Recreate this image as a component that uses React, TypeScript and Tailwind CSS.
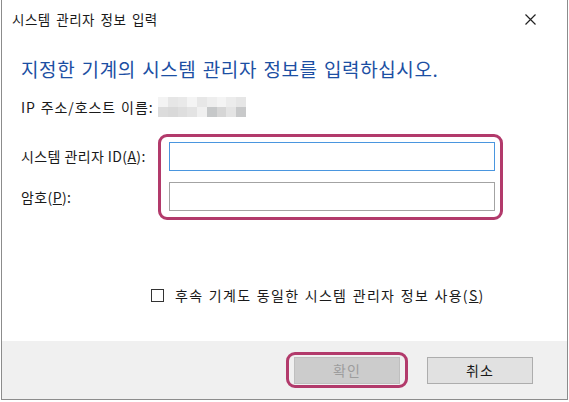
import React from "react";

const top = ["#f3f3f3", "#e6e6e6", "#e9e9e9", "#f4f4f4", "#e7e7e7", "#eeeeee", "#f4f4f4", "#ececec", "#e6e6e6"];
const bot = ["#dcdcdc", "#d9d9d9", "#dedede", "#e3e3e3", "#f0f0f0", "#c6c8c9", "#d6d6d6", "#e4e4e4", "#c8c9ca"];

export default function App() {
  const font = { fontFamily: '"Noto Sans CJK KR", "Noto Sans", sans-serif' };
  return (
    <div className="w-[569px] h-[402px] bg-white overflow-hidden" style={font}>
      <div className="ml-[1px] w-[567px] h-[400px] border-l border-r border-b border-[#8c8c8c] flex flex-col bg-white">
        {/* title bar */}
        <div className="h-[38px] flex items-center justify-between pl-[10px] pr-[31px] pt-[1px]">
          <span className="text-[13.5px] text-[#1a1a1a] tracking-[0.5px] [word-spacing:2px]">시스템 관리자 정보 입력</span>
          <svg width="11" height="11" viewBox="0 0 11 11" className="text-[#222]">
            <path d="M0.5 0.5 L10.5 10.5 M10.5 0.5 L0.5 10.5" stroke="currentColor" strokeWidth="1.2" />
          </svg>
        </div>
        {/* body */}
        <div className="flex-1 flex flex-col pl-[19px]">
          <div className="mt-[18px] text-[19px] leading-[26px] text-[#1c4fa3] tracking-[0.6px] [word-spacing:1.5px] whitespace-nowrap">
            지정한 기계의 시스템 관리자 정보를 입력하십시오.
          </div>
          <div className="mt-[15px] flex items-center h-[20px]">
            <span className="text-[14px] text-[#1a1a1a] w-[137px] tracking-[0.9px] [word-spacing:1px] whitespace-nowrap">IP 주소/호스트 이름:</span>
            <div className="grid grid-cols-9 grid-rows-2 w-[88px] h-[20px]">
              {top.map((c, i) => (
                <div key={"t" + i} style={{ background: c }} />
              ))}
              {bot.map((c, i) => (
                <div key={"b" + i} style={{ background: c }} />
              ))}
            </div>
          </div>
          <div className="mt-[17px] flex">
            <div className="w-[137px] flex flex-col text-[14px] text-[#1a1a1a] tracking-[0.4px] whitespace-nowrap">
              <div className="h-[42px] flex items-center pt-[2px]">
                <span>
                  시스템 관리자 ID(<span className="underline">A</span>):
                </span>
              </div>
              <div className="h-[41px] flex items-center pt-[2px]">
                <span>
                  암호(<span className="underline">P</span>):
                </span>
              </div>
            </div>
            <div className="w-[345px] h-[86px] border-[3px] border-[#b23a6b] rounded-[9px] flex flex-col pl-[8px] pt-[5px] gap-[11px]">
              <div className="w-[326px] h-[29px] border border-[#4a96df] bg-white" />
              <div className="w-[326px] h-[29px] border border-[#a3a3a3] bg-white" />
            </div>
          </div>
          <div className="mt-[65px] ml-[130px] flex items-center gap-[11px]">
            <div className="w-[13px] h-[13px] border border-[#333] bg-white" />
            <span className="text-[14px] text-[#1a1a1a] tracking-[1.3px] [word-spacing:1px] whitespace-nowrap">
              후속 기계도 동일한 시스템 관리자 정보 사용(<span className="underline">S</span>)
            </span>
          </div>
        </div>
        {/* footer */}
        <div className="h-[58px] bg-[#f0f0f0] flex items-center justify-end pr-[34px] gap-[19px]">
          <div className="w-[122px] h-[36px] border-[3px] border-[#b23a6b] rounded-[9px] flex items-center justify-center">
            <div className="w-[106px] h-[27px] bg-[#cccccc] border border-[#bfbfbf] flex items-center justify-center text-[14px] tracking-[1px] text-[#9d9d9d]">
              확인
            </div>
          </div>
          <div className="w-[106px] h-[27px] bg-[#e1e1e1] border border-[#adadad] flex items-center justify-center text-[14px] tracking-[1px] text-[#1a1a1a]">
            취소
          </div>
        </div>
      </div>
    </div>
  );
}
